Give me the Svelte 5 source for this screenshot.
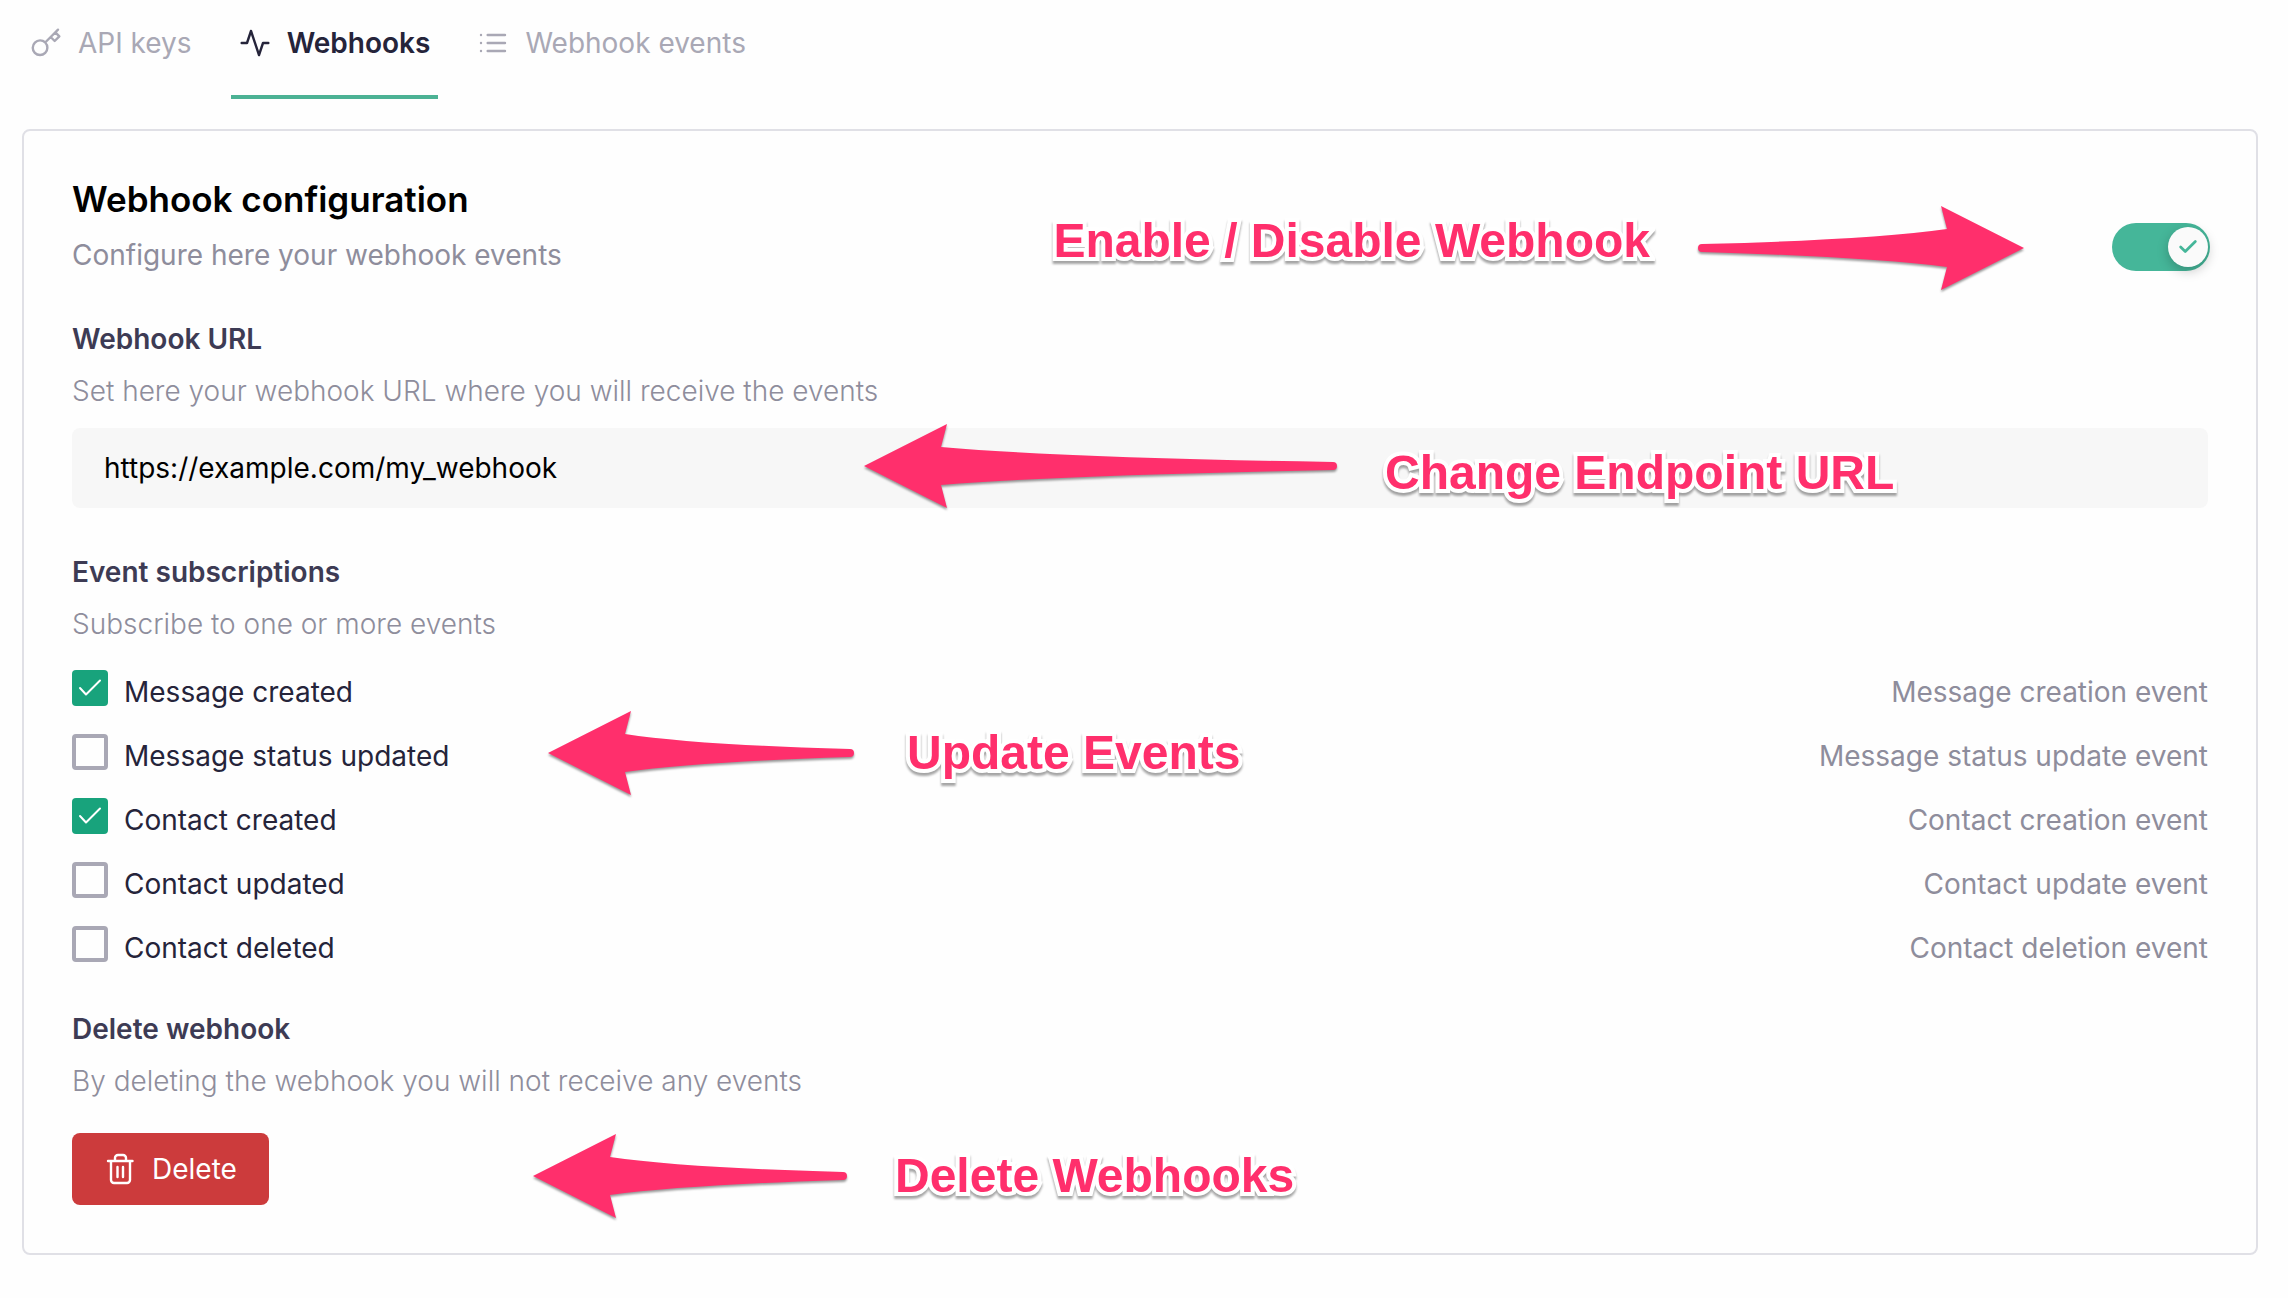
<script>
  let enabled = $state(true);
  let url = $state('https://example.com/my_webhook');
  let events = $state([
    { id: 'message-created', label: 'Message created', note: 'Message creation event', on: true },
    { id: 'message-status', label: 'Message status updated', note: 'Message status update event', on: false },
    { id: 'contact-created', label: 'Contact created', note: 'Contact creation event', on: true },
    { id: 'contact-updated', label: 'Contact updated', note: 'Contact update event', on: false },
    { id: 'contact-deleted', label: 'Contact deleted', note: 'Contact deletion event', on: false }
  ]);

  // Left-pointing arrow, 84 high, whose shaft tapers towards the tail.
  function arrowPath(len) {
    const tail = len - 4;
    const bend = 77 + Math.round((tail - 77) * 0.32);
    return `M0 42 L83 0 L77 23 Q${bend} 34 ${tail} 38 A4 4 0 0 1 ${tail} 46 Q${bend} 51 77 61 L83 84 Z`;
  }
</script>

{#snippet arrow(len, flipped)}
  <svg class="arrow" class:flipped width={len} height="84" viewBox="0 0 {len} 84" aria-hidden="true">
    <path d={arrowPath(len)} />
  </svg>
{/snippet}

<div class="page">
  <nav class="tabs">
    <a class="tab" href="#api-keys">
      <svg class="icon" viewBox="0 0 24 24" aria-hidden="true">
        <path d="M21 2l-2 2m-7.61 7.61a5.5 5.5 0 1 1-7.778 7.778 5.5 5.5 0 0 1 7.777-7.777zm0 0L15.5 7.5m0 0l3 3L22 7l-3-3m-3.5 3.5L19 4" />
      </svg>
      API keys
    </a>
    <a class="tab active" href="#webhooks" aria-current="page">
      <svg class="icon" viewBox="0 0 24 24" aria-hidden="true"><path d="M22 12h-4l-3 9L9 3l-3 9H2" /></svg>
      Webhooks
    </a>
    <a class="tab" href="#webhook-events">
      <svg class="icon" viewBox="0 0 24 24" aria-hidden="true">
        <path d="M8 6h13M8 12h13M8 18h13M3 6h.01M3 12h.01M3 18h.01" />
      </svg>
      Webhook events
    </a>
  </nav>

  <main class="card">
    <header class="head">
      <div>
        <h1>Webhook configuration</h1>
        <p class="sub">Configure here your webhook events</p>
      </div>
      <label class="switch">
        <input type="checkbox" role="switch" aria-label="Enable webhook" bind:checked={enabled} />
        <span class="knob">
          <svg viewBox="0 0 24 24" aria-hidden="true"><path d="M20 6L9 17l-5-5" /></svg>
        </span>
      </label>
      <div class="callout toggle-callout">
        <span>Enable / Disable Webhook</span>
        {@render arrow(326, true)}
      </div>
    </header>

    <section class="url">
      <h2><label for="url">Webhook URL</label></h2>
      <p>Set here your webhook URL where you will receive the events</p>
      <input id="url" type="text" bind:value={url} />
      <div class="callout url-callout">
        {@render arrow(473, false)}
        <span>Change Endpoint URL</span>
      </div>
    </section>

    <section class="events">
      <h2>Event subscriptions</h2>
      <p>Subscribe to one or more events</p>
      <ul>
        {#each events as event (event.id)}
          <li>
            <input id={event.id} type="checkbox" bind:checked={event.on} />
            <label for={event.id}>{event.label}</label>
            <span class="note">{event.note}</span>
          </li>
        {/each}
      </ul>
      <div class="callout events-callout">
        {@render arrow(306, false)}
        <span>Update Events</span>
      </div>
    </section>

    <section class="remove">
      <h2>Delete webhook</h2>
      <p>By deleting the webhook you will not receive any events</p>
      <button type="button">
        <svg viewBox="0 0 32 32" aria-hidden="true">
          <path d="M4 8h24.500M7 8v19a3 3 0 0 0 3 3h13a3 3 0 0 0 3-3V8M11 8V5a3 3 0 0 1 3-3h5a3 3 0 0 1 3 3v3M13.500 14v10M19 14v10" />
        </svg>
        Delete
      </button>
      <div class="callout remove-callout">
        {@render arrow(314, false)}
        <span>Delete Webhooks</span>
      </div>
    </section>
  </main>
</div>

<style>
  :global(body) {
    margin: 0;
    background: #fefefe;
  }

  .page {
    padding: 0 30px 42px 22px;
    font-family: Inter, 'Liberation Sans', sans-serif;
    font-size: 28px;
    line-height: 40px;
    color: #25243a;
  }

  .tabs {
    display: flex;
    gap: 31px;
    margin-bottom: 30px;
  }

  .tab {
    display: flex;
    align-items: center;
    gap: 16px;
    padding: 23px 8px 32px;
    border-bottom: 4px solid transparent;
    color: #a9a8b5;
    text-decoration: none;
  }

  .tab.active {
    border-color: #4cb294;
    color: #25243a;
    font-weight: 600;
  }

  .icon {
    width: 32px;
    height: 32px;
    fill: none;
    stroke: currentColor;
    stroke-width: 1.8;
    stroke-linecap: round;
    stroke-linejoin: round;
  }

  .card {
    padding: 44px 48px 48px;
    border: 2px solid #e0e0e6;
    border-radius: 8px;
    background: #fefefe;
  }

  h1,
  h2,
  p,
  ul {
    margin: 0;
    padding: 0;
  }

  h1 {
    margin-bottom: 12px;
    font-size: 35px;
    line-height: 48px;
    font-weight: 600;
    color: #000;
  }

  h2 {
    margin-bottom: 12px;
    font-size: 28px;
    font-weight: 600;
    color: #3d3b54;
  }

  p {
    color: #8e8d9c;
    font-weight: 300;
  }

  .sub {
    font-weight: 400;
  }

  .head,
  section {
    position: relative;
  }

  .head {
    display: flex;
    justify-content: space-between;
    align-items: flex-end;
  }

  .url,
  .events {
    margin-top: 44px;
  }

  .remove {
    margin-top: 39px;
  }

  .switch {
    display: flex;
    margin-bottom: 4px;
    position: relative;
    cursor: pointer;
  }

  .switch input {
    appearance: none;
    width: 98px;
    height: 48px;
    margin: 0 -2px 0 0;
    border-radius: 24px;
    background: #c5c5cf;
  }

  .switch input:checked {
    background: #45b699;
  }

  .knob {
    position: absolute;
    top: 4px;
    left: 4px;
    display: grid;
    place-items: center;
    width: 40px;
    height: 40px;
    border-radius: 50%;
    background: #fafafa;
    box-shadow: 0 4px 12px rgba(0, 0, 0, 0.22);
  }

  .switch input:checked + .knob {
    left: 56px;
  }

  .knob svg {
    width: 22px;
    height: 22px;
    fill: none;
    stroke: #45b699;
    stroke-width: 3;
    stroke-linecap: round;
    stroke-linejoin: round;
  }

  .url input {
    display: block;
    box-sizing: border-box;
    width: 100%;
    height: 80px;
    margin-top: 17px;
    padding: 0 32px;
    border: 0;
    border-radius: 8px;
    background: #f7f7f7;
    color: #000;
    font: inherit;
  }

  ul {
    display: grid;
    gap: 20px;
    margin-top: 26px;
    list-style: none;
  }

  li {
    display: flex;
    align-items: flex-start;
    gap: 16px;
    line-height: 44px;
  }

  li input {
    appearance: none;
    box-sizing: border-box;
    width: 36px;
    height: 36px;
    margin: 0;
    border: 4px solid #a9a8b5;
    border-radius: 4px;
  }

  li input:checked {
    border: 0;
    background: #18a37c
      url("data:image/svg+xml,%3Csvg xmlns='http://www.w3.org/2000/svg' viewBox='0 0 36 36' fill='none' stroke='white' stroke-width='2' stroke-linecap='round' stroke-linejoin='round'%3E%3Cpath d='M8 18l6 6.500L28 10.500'/%3E%3C/svg%3E");
  }

  .note {
    margin-left: auto;
    color: #8e8d9c;
  }

  button {
    display: flex;
    align-items: center;
    gap: 16px;
    height: 72px;
    margin-top: 32px;
    padding: 0 32px;
    border: 0;
    border-radius: 8px;
    background: #cc3b3c;
    color: #fff;
    font: inherit;
  }

  button svg {
    width: 32px;
    height: 32px;
    fill: none;
    stroke: currentColor;
    stroke-width: 2.4;
    stroke-linecap: round;
    stroke-linejoin: round;
  }

  .callout {
    position: absolute;
    display: flex;
    align-items: center;
    gap: 48px;
    pointer-events: none;
    white-space: nowrap;
    font-family: 'Liberation Sans', Arial, sans-serif;
    font-size: 48px;
    line-height: 70px;
    font-weight: 700;
    color: #ff2f6c;
  }

  .callout span {
    -webkit-text-stroke: 8px #fff;
    paint-order: stroke fill;
    stroke-linejoin: round;
    filter: drop-shadow(0 3px 1px rgba(0, 0, 0, 0.35));
  }

  .arrow {
    overflow: visible;
    fill: currentColor;
    filter: drop-shadow(0 2px 1px rgba(0, 0, 0, 0.4));
  }

  .arrow.flipped path {
    transform: scaleX(-1);
    transform-box: fill-box;
    transform-origin: center;
  }

  .toggle-callout {
    top: 31px;
    right: 184px;
    align-items: flex-start;
  }

  .url-callout {
    top: 105px;
    left: 792px;
    align-items: flex-end;
  }

  .events-callout {
    top: 159px;
    left: 476px;
    gap: 53px;
  }

  .remove-callout {
    top: 125px;
    left: 461px;
  }
</style>
